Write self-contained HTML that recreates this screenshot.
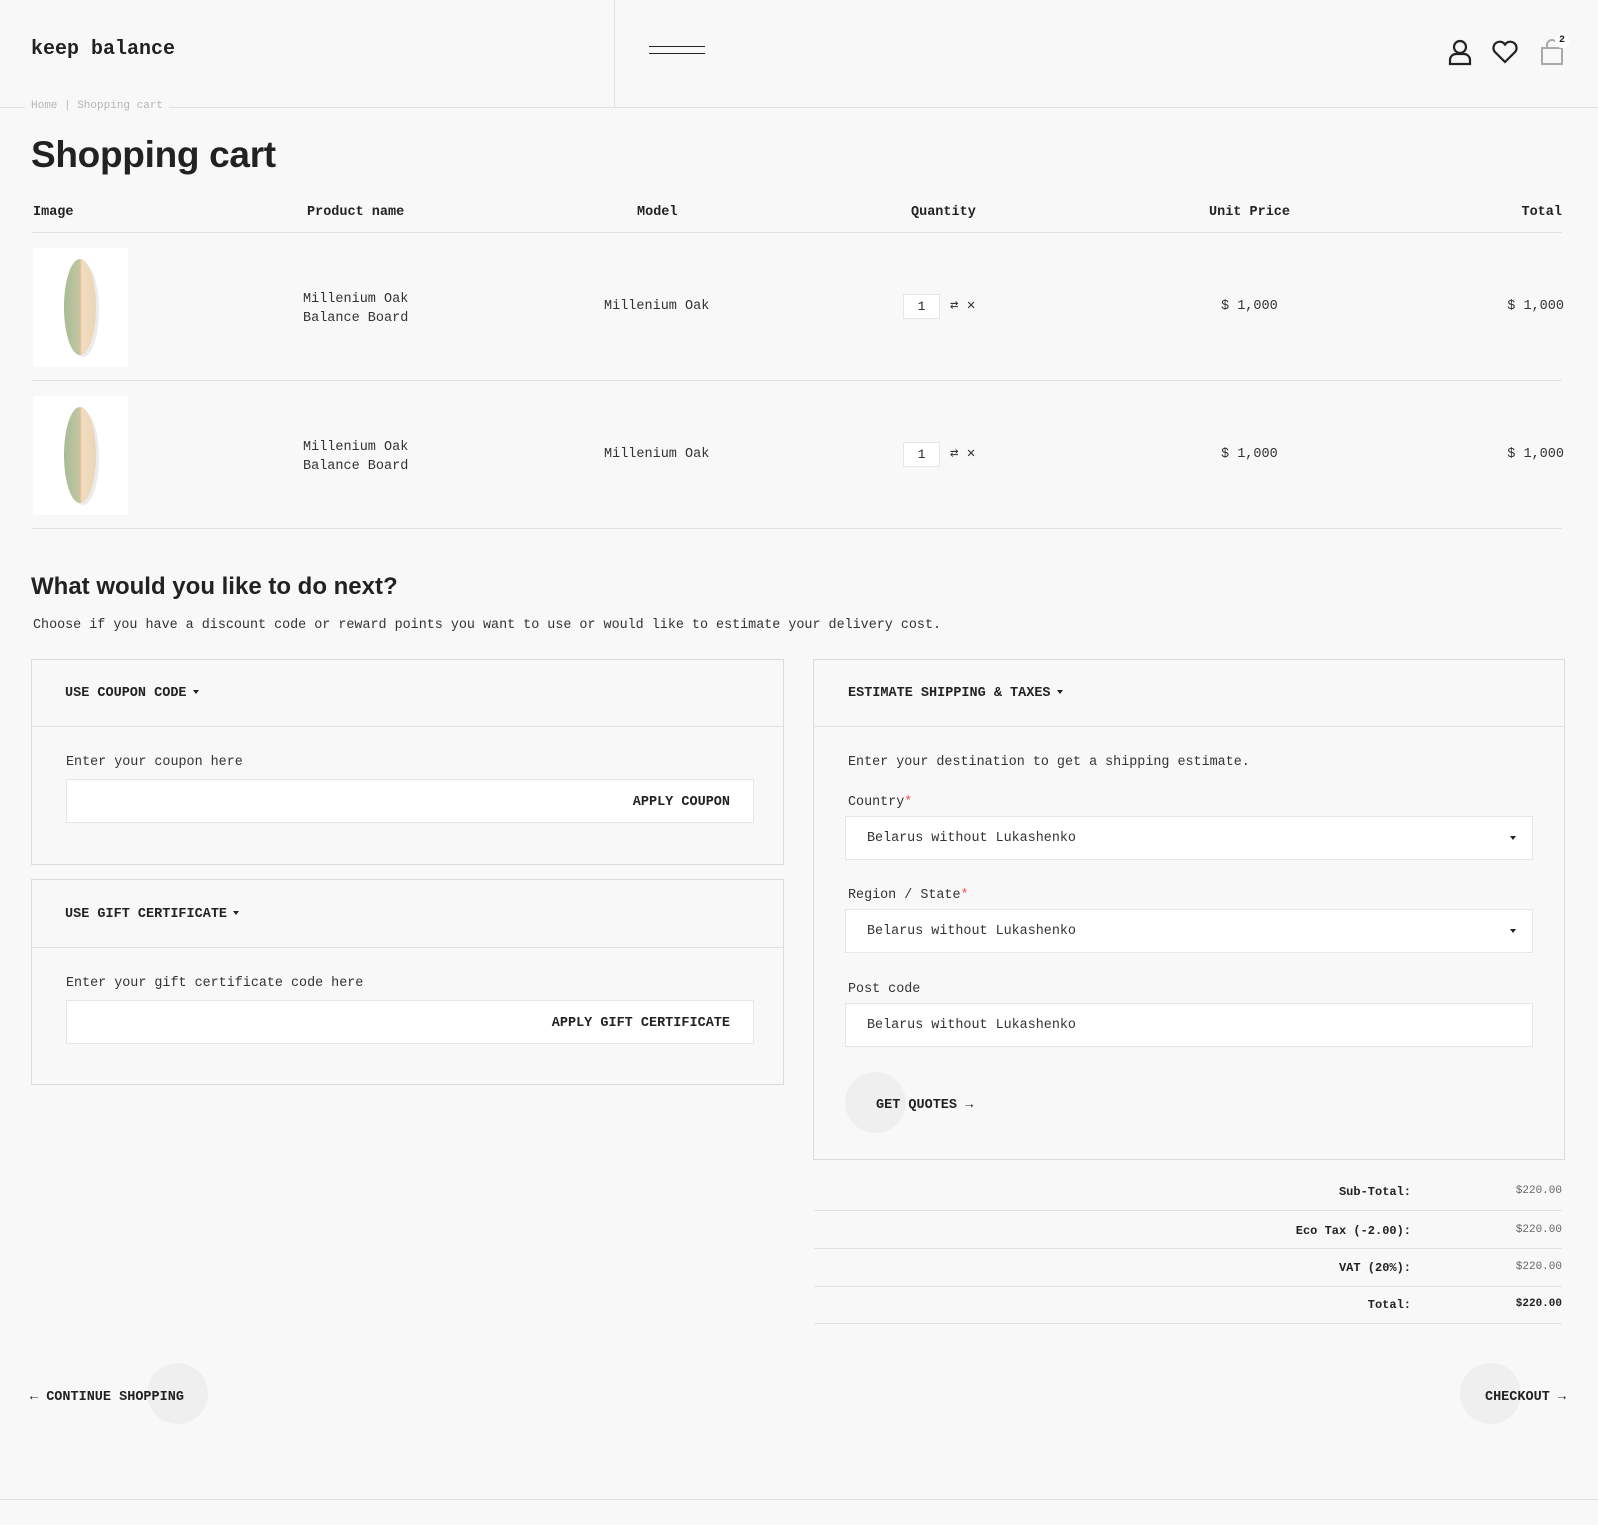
<!DOCTYPE html>
<html><head><meta charset="utf-8"><style>
*{box-sizing:border-box;margin:0;padding:0}
body{width:1598px;height:1525px;background:#f8f8f8;color:#222;font-family:"Liberation Mono",monospace;position:relative;overflow:hidden}
.a{position:absolute;white-space:nowrap}
.line{position:absolute;height:1px;background:#e2e2e2}
.h{font-family:"Liberation Sans",sans-serif;font-weight:600;color:#222}
.th{font-size:13.5px;font-weight:bold;top:205px}
.td{font-size:13.5px;color:#333}
.box{position:absolute;border:1px solid #dcdcdc}
.inp{position:absolute;background:#fff;border:1px solid #e6e6e6}
.btn{font-size:13.5px;font-weight:bold;color:#222}
.lbl{font-size:13.4px;color:#333}
.circ{position:absolute;border-radius:50%;background:#efefef}
.caret{display:inline-block;width:0;height:0;border-left:3.5px solid transparent;border-right:3.5px solid transparent;border-top:4px solid #222;vertical-align:middle;margin-left:6px}
.tl{font-size:12px;font-weight:bold;text-align:right;right:187px}
.tv{font-size:11px;color:#666;right:36px}
</style></head><body>
<!-- header -->
<div class="a" style="left:31px;top:38px;font-size:20px;font-weight:bold">keep balance</div>
<div class="line" style="left:614px;top:0;width:1px;height:107px"></div>
<div class="line" style="left:0;top:107px;width:1598px"></div>
<div class="a" style="left:649px;top:46px;width:56px;height:1px;background:#222"></div>
<div class="a" style="left:649px;top:53px;width:56px;height:1px;background:#222"></div>
<svg class="a" style="left:1447px;top:38px" width="26" height="28" viewBox="0 0 26 28" fill="none" stroke="#222" stroke-width="2.2"><circle cx="13" cy="9" r="6"/><path d="M3 26v-4a6 6 0 0 1 6-6h8a6 6 0 0 1 6 6v4z"/></svg>
<svg class="a" style="left:1491px;top:40px" width="28" height="24" viewBox="0 0 28 24" fill="none" stroke="#222" stroke-width="2.2"><path d="M14 22L3.5 11.5A5.8 5.8 0 0 1 14 4.5a5.8 5.8 0 0 1 10.5 7z"/></svg>
<svg class="a" style="left:1540px;top:38px" width="24" height="28" viewBox="0 0 24 28" fill="none" stroke="#aaa" stroke-width="2"><path d="M2 10h20v16H2z"/><path d="M7 10V7a5 5 0 0 1 10 0"/></svg>
<div class="a" style="left:1555px;top:34px;width:14px;height:14px;border-radius:50%;background:#fff;font-size:10px;font-weight:bold;text-align:center;line-height:14px">2</div>
<!-- breadcrumb -->
<div class="a" style="left:25px;top:100px;background:#f8f8f8;padding:0 6px;font-size:11px;color:#b5b5b5">Home | Shopping cart</div>
<div class="a h" style="left:31px;top:134px;font-size:37px;letter-spacing:-0.3px">Shopping cart</div>
<!-- table -->
<div class="a th" style="left:33px">Image</div>
<div class="a th" style="left:307px">Product name</div>
<div class="a th" style="left:637px">Model</div>
<div class="a th" style="left:911px">Quantity</div>
<div class="a th" style="left:1209px">Unit Price</div>
<div class="a th" style="right:36px">Total</div>
<div class="line" style="left:32px;top:232px;width:1530px"></div>
<div class="line" style="left:32px;top:380px;width:1530px"></div>
<div class="line" style="left:32px;top:528px;width:1530px"></div>
<style>.img{position:absolute;left:33px;width:95px;height:119px;background:#fff}</style>
<svg width="0" height="0" style="position:absolute"><defs><linearGradient id="g" x1="0" x2="1"><stop offset="0" stop-color="#a8bb96"/><stop offset=".48" stop-color="#c3c6a2"/><stop offset=".5" stop-color="#e6b993"/><stop offset=".56" stop-color="#f1dcc0"/><stop offset="1" stop-color="#ead6b6"/></linearGradient></defs></svg>
<div class="img" style="top:248px"><svg width="95" height="119"><ellipse cx="50" cy="62" rx="16" ry="47" fill="#ccc" opacity=".4"/><ellipse cx="47" cy="59" rx="16" ry="48" fill="url(#g)"/></svg></div>
<div class="img" style="top:396px"><svg width="95" height="119"><ellipse cx="50" cy="62" rx="16" ry="47" fill="#ccc" opacity=".4"/><ellipse cx="47" cy="59" rx="16" ry="48" fill="url(#g)"/></svg></div>
<div class="a td" style="left:303px;top:290px;line-height:19px">Millenium Oak<br>Balance Board</div>
<div class="a td" style="left:604px;top:299px">Millenium Oak</div>
<div class="inp" style="left:903px;top:294px;width:37px;height:25px;font-size:13px;text-align:center;line-height:23px">1</div>
<div class="a td" style="left:950px;top:297px;font-size:14px">⇄ ✕</div>
<div class="a td" style="left:1221px;top:299px">$ 1,000</div>
<div class="a td" style="right:34px;top:299px">$ 1,000</div>
<div class="a td" style="left:303px;top:438px;line-height:19px">Millenium Oak<br>Balance Board</div>
<div class="a td" style="left:604px;top:447px">Millenium Oak</div>
<div class="inp" style="left:903px;top:442px;width:37px;height:25px;font-size:13px;text-align:center;line-height:23px">1</div>
<div class="a td" style="left:950px;top:445px;font-size:14px">⇄ ✕</div>
<div class="a td" style="left:1221px;top:447px">$ 1,000</div>
<div class="a td" style="right:34px;top:447px">$ 1,000</div>
<!-- next -->
<div class="a h" style="left:31px;top:573px;font-size:24px">What would you like to do next?</div>
<div class="a" style="left:33px;top:618px;font-size:13.4px;color:#333">Choose if you have a discount code or reward points you want to use or would like to estimate your delivery cost.</div>
<!-- coupon -->
<div class="box" style="left:31px;top:659px;width:753px;height:206px"></div>
<div class="line" style="left:32px;top:726px;width:751px"></div>
<div class="a btn" style="left:65px;top:686px">USE COUPON CODE<span class="caret"></span></div>
<div class="a lbl" style="left:66px;top:755px">Enter your coupon here</div>
<div class="inp" style="left:66px;top:779px;width:688px;height:44px"></div>
<div class="a btn" style="right:868px;top:795px">APPLY COUPON</div>
<!-- gift -->
<div class="box" style="left:31px;top:879px;width:753px;height:206px"></div>
<div class="line" style="left:32px;top:947px;width:751px"></div>
<div class="a btn" style="left:65px;top:907px">USE GIFT CERTIFICATE<span class="caret"></span></div>
<div class="a lbl" style="left:66px;top:976px">Enter your gift certificate code here</div>
<div class="inp" style="left:66px;top:1000px;width:688px;height:44px"></div>
<div class="a btn" style="right:868px;top:1016px">APPLY GIFT CERTIFICATE</div>
<!-- shipping -->
<div class="box" style="left:813px;top:659px;width:752px;height:501px"></div>
<div class="line" style="left:814px;top:726px;width:750px"></div>
<div class="a btn" style="left:848px;top:686px">ESTIMATE SHIPPING &amp; TAXES<span class="caret"></span></div>
<div class="a lbl" style="left:848px;top:755px">Enter your destination to get a shipping estimate.</div>
<div class="a lbl" style="left:848px;top:795px">Country<span style="color:#e55">*</span></div>
<div class="inp" style="left:845px;top:816px;width:688px;height:44px"></div>
<div class="a lbl" style="left:867px;top:831px">Belarus without Lukashenko</div>
<div class="a" style="left:1510px;top:836px;border-left:3.5px solid transparent;border-right:3.5px solid transparent;border-top:4px solid #222"></div>
<div class="a lbl" style="left:848px;top:888px">Region / State<span style="color:#e55">*</span></div>
<div class="inp" style="left:845px;top:909px;width:688px;height:44px"></div>
<div class="a lbl" style="left:867px;top:924px">Belarus without Lukashenko</div>
<div class="a" style="left:1510px;top:929px;border-left:3.5px solid transparent;border-right:3.5px solid transparent;border-top:4px solid #222"></div>
<div class="a lbl" style="left:848px;top:982px">Post code</div>
<div class="inp" style="left:845px;top:1003px;width:688px;height:44px"></div>
<div class="a lbl" style="left:867px;top:1018px">Belarus without Lukashenko</div>
<div class="circ" style="left:845px;top:1072px;width:61px;height:61px"></div>
<div class="a btn" style="left:876px;top:1098px">GET QUOTES →</div>
<!-- totals -->
<div class="a tl" style="top:1185px">Sub-Total:</div><div class="a tv" style="top:1185px">$220.00</div>
<div class="line" style="left:814px;top:1210px;width:748px"></div>
<div class="a tl" style="top:1224px">Eco Tax (-2.00):</div><div class="a tv" style="top:1224px">$220.00</div>
<div class="line" style="left:814px;top:1248px;width:748px"></div>
<div class="a tl" style="top:1261px">VAT (20%):</div><div class="a tv" style="top:1261px">$220.00</div>
<div class="line" style="left:814px;top:1286px;width:748px"></div>
<div class="a tl" style="top:1298px">Total:</div><div class="a tv" style="top:1298px;color:#222;font-weight:bold">$220.00</div>
<div class="line" style="left:814px;top:1323px;width:748px"></div>
<!-- bottom -->
<div class="circ" style="left:147px;top:1363px;width:61px;height:61px"></div>
<div class="a btn" style="left:30px;top:1390px">← CONTINUE SHOPPING</div>
<div class="circ" style="left:1460px;top:1363px;width:61px;height:61px"></div>
<div class="a btn" style="right:32px;top:1390px">CHECKOUT →</div>
<div class="line" style="left:0;top:1499px;width:1598px"></div>
</body></html>
